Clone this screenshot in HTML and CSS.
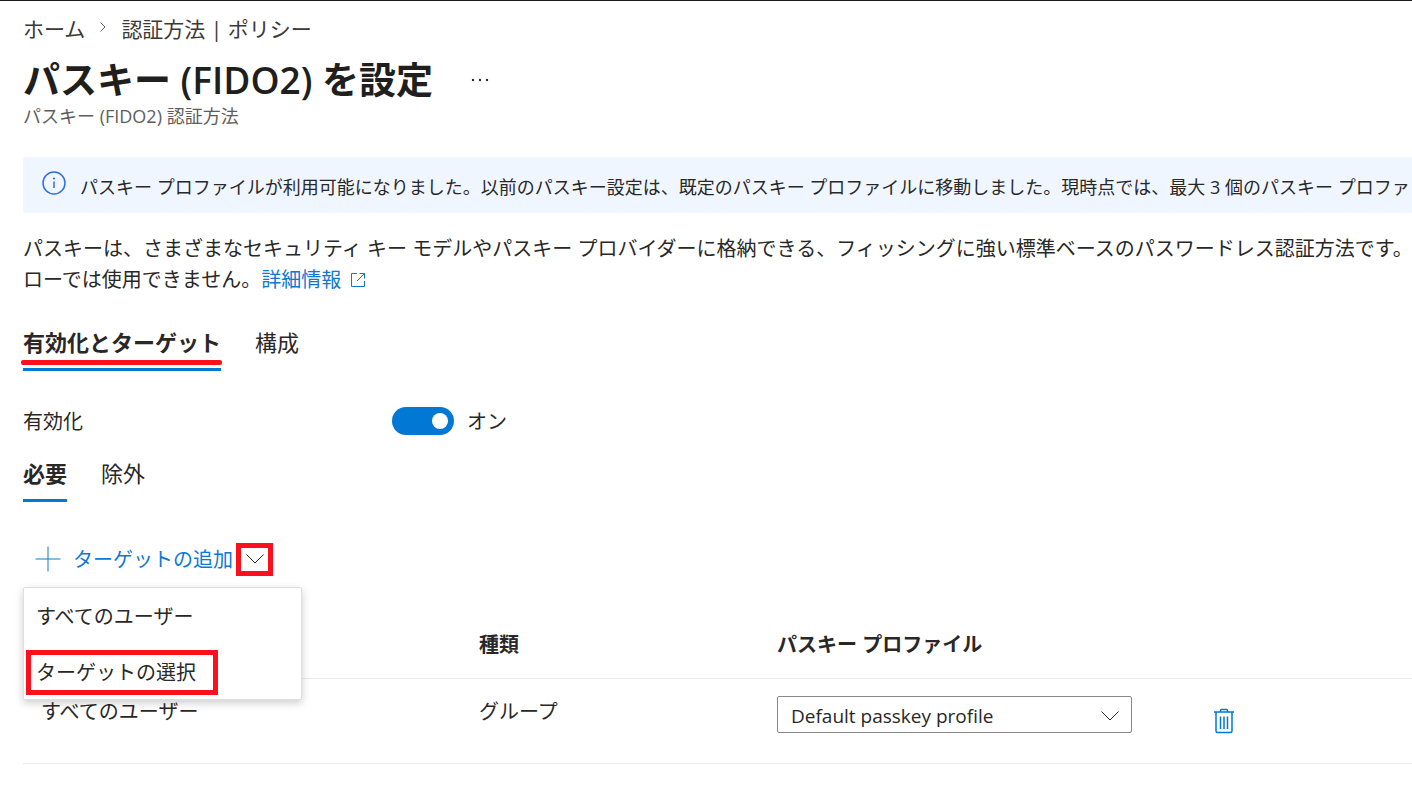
FILE: index.html
```html
<!DOCTYPE html>
<html lang="ja">
<head>
<meta charset="utf-8">
<meta name="viewport" content="width=device-width, initial-scale=1">
<title>パスキー (FIDO2) を設定</title>
<link rel="stylesheet" href="styles.css">
</head>
<body>
<main class="blade">
  <nav class="breadcrumb" aria-label="階層リンク">
    <a href="#">ホーム</a>
    <svg class="breadcrumb-sep" viewBox="0 0 8 12" aria-hidden="true"><path d="M1.5 1.5 6 6l-4.500 4.500"/></svg>
    <a href="#">認証方法 | ポリシー</a>
  </nav>

  <header class="heading">
    <h1 class="title">パスキー (FIDO2) を設定</h1>
    <button class="more" type="button" aria-label="その他">
      <svg viewBox="0 0 18 4" aria-hidden="true"><circle cx="2" cy="2" r="1.200"/><circle cx="9" cy="2" r="1.200"/><circle cx="16" cy="2" r="1.200"/></svg>
    </button>
  </header>
  <p class="subtitle">パスキー (FIDO2) 認証方法</p>

  <div class="banner" role="status">
    <svg class="banner-icon" viewBox="0 0 24 24" aria-hidden="true"><circle cx="12" cy="12" r="11"/><path d="M12 10.500v6.500"/><circle class="dot" cx="12" cy="7.500" r="1.100"/></svg>
    <span class="banner-text">パスキー プロファイルが利用可能になりました。以前のパスキー設定は、既定のパスキー プロファイルに移動しました。現時点では、最大 3 個のパスキー プロファ</span>
  </div>

  <p class="description">パスキーは、さまざまなセキュリティ キー モデルやパスキー プロバイダーに格納できる、フィッシングに強い標準ベースのパスワードレス認証方法です。<br>ローでは使用できません。<a class="link" href="#">詳細情報<svg class="external" viewBox="0 0 16 16" aria-hidden="true"><path d="M7 1.500H1.500v13h13V9M9.500 1.500h5v5M14.500 1.500 7 9"/></svg></a></p>

  <div class="tabs" role="tablist">
    <button class="tab tab-active tab-marked" type="button" role="tab" aria-selected="true">有効化とターゲット</button>
    <button class="tab" type="button" role="tab" aria-selected="false">構成</button>
  </div>

  <div class="setting">
    <label class="setting-label" for="enable">有効化</label>
    <input class="toggle" id="enable" type="checkbox" role="switch" checked>
    <span class="toggle-state">オン</span>
  </div>

  <div class="tabs" role="tablist">
    <button class="tab tab-active" type="button" role="tab" aria-selected="true">必要</button>
    <button class="tab" type="button" role="tab" aria-selected="false">除外</button>
  </div>

  <div class="command">
    <button class="add" type="button">
      <svg class="plus" viewBox="0 0 26 26" aria-hidden="true"><path d="M13 .5v25M.5 13h25"/></svg>
      <span class="add-text">ターゲットの追加</span>
    </button>
    <button class="expand marked" type="button" aria-label="メニューを開く" aria-expanded="true">
      <svg class="chevron" viewBox="0 0 18 10" aria-hidden="true"><path d="M.5.500 9 9 17.500.500"/></svg>
    </button>
    <div class="menu" role="menu">
      <button class="menu-item" type="button" role="menuitem">すべてのユーザー</button>
      <button class="menu-item marked" type="button" role="menuitem">ターゲットの選択</button>
    </div>
  </div>

  <table class="targets">
    <colgroup><col class="col-name"><col class="col-type"><col class="col-profile"><col></colgroup>
    <thead>
      <tr><th></th><th>種類</th><th>パスキー プロファイル</th><th></th></tr>
    </thead>
    <tbody>
      <tr>
        <td class="cell-name">すべてのユーザー</td>
        <td>グループ</td>
        <td>
          <div class="profile">
            <select class="profile-select" aria-label="パスキー プロファイル"><option>Default passkey profile</option></select>
            <svg class="chevron profile-chevron" viewBox="0 0 18 10" aria-hidden="true"><path d="M.5.500 9 9 17.500.500"/></svg>
          </div>
        </td>
        <td>
          <button class="delete" type="button" aria-label="削除">
            <svg viewBox="0 0 20 26" aria-hidden="true"><path d="M0 4h20M6.500 4V2.500q0-1 1-1h5q1 0 1 1V4M2 4v19q0 1.500 1.500 1.500h13q1.500 0 1.500-1.500V4"/><path d="M6.500 8.500v12.500M10 8.500v12.500M13.500 8.500v12.500"/></svg>
          </button>
        </td>
      </tr>
    </tbody>
  </table>
</main>
</body>
</html>
```

FILE: styles.css
```css
* {
  box-sizing: border-box;
}

body {
  margin: 0;
  border-top: 1px solid #1b1a19;
  background: #fff;
  color: #292827;
  font-family: "Open Sans", "Noto Sans CJK JP", sans-serif;
  font-size: 20px;
  line-height: 32px;
  overflow-x: hidden;
}

button,
select {
  margin: 0;
  padding: 0;
  border: 0;
  background: none;
  color: inherit;
  font: inherit;
}

svg {
  display: block;
  fill: none;
  stroke: currentColor;
}

.blade {
  padding: 12px 0 0 23px;
}

.breadcrumb {
  display: flex;
  align-items: center;
  gap: 14px;
  font-size: 21px;
}

.breadcrumb a {
  color: #3b3a39;
  text-decoration: none;
}

.breadcrumb-sep {
  width: 8px;
  height: 12px;
  margin-bottom: 4px;
  color: #605e5c;
}

.heading {
  display: flex;
  align-items: center;
  gap: 38px;
  margin-top: 11px;
}

.title {
  margin: 0;
  color: #201f1e;
  font-size: 37px;
  font-weight: 600;
  line-height: 48px;
}

.more svg {
  width: 18px;
  height: 4px;
  fill: currentColor;
  stroke: none;
}

.subtitle {
  margin: 0;
  color: #605e5c;
  font-size: 18px;
  line-height: 24px;
}

.banner {
  display: flex;
  gap: 14px;
  margin-top: 29px;
  padding: 14px 0 10px 19px;
  overflow: hidden;
  border-radius: 2px 0 0 2px;
  background: #f0f6ff;
  font-size: 18px;
  white-space: nowrap;
}

.banner-icon {
  flex: none;
  width: 24px;
  height: 24px;
  color: #2f6fe4;
  stroke-width: 1.500;
}

.banner-icon .dot {
  fill: currentColor;
  stroke: none;
}

.description {
  margin: 20px 0 0;
  overflow: hidden;
  line-height: 31px;
  white-space: nowrap;
}

.link {
  color: #0f78d4;
  text-decoration: none;
}

.external {
  display: inline-block;
  width: 16px;
  height: 16px;
  margin-left: 9px;
  vertical-align: -1px;
}

.tabs {
  display: flex;
  gap: 34px;
  margin-top: 32px;
}

.tab {
  position: relative;
  padding-bottom: 11px;
  border-bottom: 3px solid transparent;
  font-size: 22px;
  line-height: 30px;
}

.tab-active {
  border-color: #0078d4;
  font-weight: 700;
}

/* Red emphasis line over the active tab */
.tab-marked::after {
  content: "";
  position: absolute;
  right: -1px;
  bottom: 3px;
  left: -2px;
  height: 5px;
  border-radius: 2px;
  background: #fb101c;
}

.setting {
  display: grid;
  grid-template-columns: 369px auto 1fr;
  align-items: center;
  margin-top: 33px;
}

.setting-label,
.toggle-state {
  padding-top: 2px;
}

.toggle {
  display: flex;
  align-items: center;
  justify-content: flex-end;
  width: 62px;
  height: 28px;
  margin: 0;
  padding: 6px;
  appearance: none;
  border-radius: 14px;
  background: #0078d4;
}

.toggle::before {
  content: "";
  width: 16px;
  height: 16px;
  border-radius: 50%;
  background: #fff;
}

.toggle:not(:checked) {
  justify-content: flex-start;
  background: #8a8886;
}

.toggle-state {
  margin-left: 13px;
}

.setting + .tabs {
  margin-top: 20px;
}

.command {
  position: relative;
  display: flex;
  align-items: center;
  gap: 3px;
  margin-top: 40px;
  padding-left: 12px;
}

.add {
  display: flex;
  align-items: center;
  gap: 12px;
  color: #0f78d4;
}

.add-text {
  padding-top: 2px;
}

.plus {
  width: 26px;
  height: 26px;
}

.marked {
  border: 5px solid #fb101c;
}

.expand {
  display: grid;
  place-items: center;
  width: 37px;
  height: 33px;
}

.chevron {
  width: 18px;
  height: 10px;
}

.menu {
  position: absolute;
  top: 45px;
  left: 0;
  z-index: 1;
  display: flex;
  flex-direction: column;
  align-items: flex-start;
  gap: 14px;
  width: 279px;
  padding: 10px 2px 4px;
  border: 1px solid #e1dfdd;
  border-radius: 2px;
  background: #fff;
  box-shadow: 0 3px 8px rgba(0, 0, 0, 0.2);
}

.menu-item {
  height: 38px;
  padding: 0 10px;
}

.menu-item.marked {
  height: 45px;
  padding: 0 17px 0 5px;
}

.targets {
  width: 100%;
  margin-top: 33px;
  border-collapse: collapse;
  table-layout: fixed;
}

.col-name {
  width: 456px;
}

.col-type {
  width: 298px;
}

.col-profile {
  width: 437px;
}

.targets th,
.targets td {
  padding: 0;
  border-bottom: 1px solid #edebe9;
  text-align: left;
  vertical-align: top;
}

.targets th {
  height: 69px;
  padding-top: 20px;
}

.targets td {
  height: 85px;
  padding-top: 17px;
}

.targets .cell-name {
  padding-left: 18px;
}

.profile {
  position: relative;
  width: 355px;
}

.profile-select {
  display: block;
  width: 100%;
  height: 37px;
  padding: 3px 40px 0 13px;
  appearance: none;
  border: 1px solid #8a8886;
  border-radius: 2px;
  background: #fff;
  font-size: 19px;
}

.profile-chevron {
  position: absolute;
  top: 15px;
  right: 13px;
  pointer-events: none;
}

.delete {
  margin-top: 12px;
  color: #0078d4;
}

.delete svg {
  width: 20px;
  height: 26px;
  stroke-width: 1.500;
}
```
